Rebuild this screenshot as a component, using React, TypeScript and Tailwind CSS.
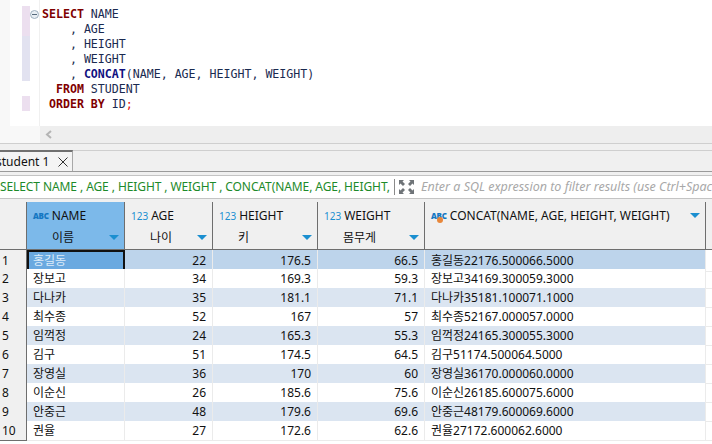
import React from 'react';

const ui = "font-['Noto_Sans','Noto_Sans_CJK_KR',sans-serif]";

const rows = [
  ['홍길동', '22', '176.5', '66.5', '홍길동22176.500066.5000'],
  ['장보고', '34', '169.3', '59.3', '장보고34169.300059.3000'],
  ['다나카', '35', '181.1', '71.1', '다나카35181.100071.1000'],
  ['최수종', '52', '167', '57', '최수종52167.000057.0000'],
  ['임꺽정', '24', '165.3', '55.3', '임꺽정24165.300055.3000'],
  ['김구', '51', '174.5', '64.5', '김구51174.500064.5000'],
  ['장영실', '36', '170', '60', '장영실36170.000060.0000'],
  ['이순신', '26', '185.6', '75.6', '이순신26185.600075.6000'],
  ['안중근', '48', '179.6', '69.6', '안중근48179.600069.6000'],
  ['권율', '27', '172.6', '62.6', '권율27172.600062.6000'],
];

const Kw = ({ children }: { children: React.ReactNode }) => (
  <span className="font-bold text-[#7f0000]">{children}</span>
);

const Arrow = () => (
  <svg width="10" height="5" viewBox="0 0 10 5" className="-mt-[2px] shrink-0">
    <path d="M0 0h10L5 5z" fill="#1b8fd0" />
  </svg>
);

const HeaderCell = ({
  icon,
  name,
  label,
  selected,
}: {
  icon: 'abc' | '123';
  name: string;
  label: string;
  selected?: boolean;
}) => (
  <div className={`flex flex-col border-r border-r-[#6e6e6e] pl-[6px] pr-[5px] ${selected ? 'bg-[#7cb9ea]' : 'bg-[#f0f0f0]'}`}>
    <div className="flex h-[26px] items-center gap-[3px] pt-[2px]">
      {icon === 'abc' ? (
        <span className="text-[8px] font-black leading-none tracking-[-0.2px] text-[#1577c2]">ABC</span>
      ) : (
        <span className="text-[10px] leading-none text-[#1b8fd0]">123</span>
      )}
      <span>{name}</span>
    </div>
    <div className="flex h-[20px] items-center justify-between">
      <span className="flex-1 pl-[19px] text-[12px]">{label}</span>
      <Arrow />
    </div>
  </div>
);

export default function App() {
  return (
    <div className={`flex h-[444px] w-[712px] flex-col overflow-hidden bg-[#f0f0f0] text-[12px] text-[#111] ${ui}`}>
      {/* SQL editor */}
      <div className="flex h-[126px] shrink-0 bg-[#f8f8f8] pl-[10px]">
        <div className="flex w-[30px] shrink-0 flex-col border-r border-r-[#f0f0f0] bg-white pl-[12px] pt-[6px]">
          <div className="relative h-[30px] w-[8px] bg-[#ecdfef]">
            <div className="absolute left-[8px] top-[4px] flex h-[9px] w-[9px] items-center justify-center rounded-full border border-[#9fb0bf] bg-[#e8eef3]">
              <div className="h-px w-[5px] bg-[#55687a]" />
            </div>
          </div>
          <div className="h-[45px] w-[8px] bg-[#e2e2f0]" />
          <div className="h-[15px] w-[8px]" />
          <div className="h-[15px] w-[8px] bg-[#ecdfef]" />
        </div>
        <pre className="flex-1 bg-white pl-[2px] pt-[7px] font-['DejaVu_Sans_Mono',monospace] text-[11.6px] leading-[15px] text-[#1a2a50]">
          <Kw>SELECT</Kw> NAME{'\n'}
          {'    , AGE\n'}
          {'    , HEIGHT\n'}
          {'    , WEIGHT\n'}
          {'    , '}<span className="font-bold text-[#10107f]">CONCAT</span>(NAME, AGE, HEIGHT, WEIGHT){'\n'}
          {'  '}<Kw>FROM</Kw> STUDENT{'\n'}
          {' '}<Kw>ORDER BY</Kw> ID<span className="text-[#e01010]">;</span>
        </pre>
      </div>

      {/* horizontal scrollbar */}
      <div className="flex h-[18px] shrink-0 border-b border-b-[#cfcfcf] bg-[#f8f8f8] pl-[40px]">
        <div className="flex flex-1 items-center bg-[#eeeeee] pl-[5px]">
          <svg width="8" height="9" viewBox="0 0 8 9">
            <path d="M6 1L2 4.5 6 8" fill="none" stroke="#b4b4b4" strokeWidth="2" />
          </svg>
        </div>
      </div>

      {/* tab strip */}
      <div className="mt-[6px] flex h-[22px] shrink-0 border-b border-b-[#9a9a9a]">
        <div className="flex w-[73px] items-center gap-[9px] border-r border-t-2 border-r-[#a8a8a8] border-t-[#707070] bg-[#f4f4f4]">
          <span className="-ml-[4px] whitespace-nowrap">student 1</span>
          <svg width="10" height="10" viewBox="0 0 10 10" className="shrink-0">
            <path d="M.5.5l9 9M9.500.5l-9 9" stroke="#333" strokeWidth="1" />
          </svg>
        </div>
        <div className="flex-1 border-t border-t-[#cfcfcf]" />
      </div>

      {/* filter bar */}
      <div className="mt-[3px] flex h-[24px] shrink-0 items-center border-y border-y-[#c4c4c4] bg-white">
        <div className="w-[394px] shrink-0 whitespace-nowrap tracking-[-0.09px] text-[#1d8a2a]">
          SELECT NAME , AGE , HEIGHT , WEIGHT , CONCAT(NAME, AGE, HEIGHT,
        </div>
        <div className="h-[16px] w-px shrink-0 bg-[#8a8a8a]" />
        <svg width="17" height="16" viewBox="0 0 17 16" className="ml-[3px] shrink-0">
          <path
            d="M1 1h5L4.500 2.500 7 5 5 7 2.500 4.500 1 6zM16 1h-5l1.500 1.500L10 5l2 2 2.500-2.500L16 6zM1 15h5l-1.500-1.500L7 11 5 9l-2.500 2.500L1 10zM16 15h-5l1.500-1.500L10 11l2-2 2.500 2.500L16 10z"
            fill="#6f7478"
          />
        </svg>
        <span className="ml-[6px] whitespace-nowrap text-[12.5px] italic text-[#a8a8a8]">
          Enter a SQL expression to filter results (use Ctrl+Space)
        </span>
      </div>

      {/* results grid */}
      <div className="mt-[3px] grid flex-1 grid-cols-[27px_98px_88px_105px_107px_281px_1fr] grid-rows-[48px] content-start bg-white">
        <div className="border-r border-b border-r-[#6e6e6e] border-b-[#6e6e6e] bg-[#f0f0f0]" />
        <div className="col-span-6 grid grid-cols-subgrid border-b border-b-[#6e6e6e] bg-[#f0f0f0]">
          <HeaderCell icon="abc" name="NAME" label="이름" selected />
          <HeaderCell icon="123" name="AGE" label="나이" />
          <HeaderCell icon="123" name="HEIGHT" label="키" />
          <HeaderCell icon="123" name="WEIGHT" label="몸무게" />
          <div className="border-r border-r-[#6e6e6e]">
            <div className="flex h-[26px] items-center justify-between pl-[6px] pr-[5px] pt-[2px]">
              <div className="flex items-center gap-[3px]">
                <span className="relative text-[8px] font-black leading-none tracking-[-0.2px] text-[#1577c2]">
                  ABC
                  <span className="absolute left-[6px] top-[5px] h-[6px] w-[6px] rounded-full bg-[#e8873a]" />
                </span>
                <span>CONCAT(NAME, AGE, HEIGHT, WEIGHT)</span>
              </div>
              <Arrow />
            </div>
          </div>
          <div />
        </div>

        {rows.map((row, i) => {
          const stripe = i === 0 ? 'bg-[#bdd4eb]' : i % 2 === 0 ? 'bg-[#dbe5f1]' : 'bg-white';
          return (
            <div key={i} className="col-span-7 grid h-[19px] grid-cols-subgrid">
              <div className="flex items-center border-r border-b border-r-[#6e6e6e] border-b-[#6e6e6e] bg-[#f0f0f0] pl-[2px] pt-px">
                {i + 1}
              </div>
              {row.map((cell, j) => {
                const isFocus = i === 0 && j === 0;
                const right = j >= 1 && j <= 3;
                return (
                  <div
                    key={j}
                    className={`flex items-center whitespace-nowrap ${right ? 'justify-end pr-[6px]' : ''} ${
                      isFocus
                        ? 'border-2 border-[#111] bg-[#6aa9e0] pl-[4px] text-[#dcebf8]'
                        : `border-r border-b border-r-[#ebebeb] border-b-[#ebebeb] pt-px ${right ? '' : 'pl-[6px]'} ${stripe}`
                    }`}
                  >
                    {cell}
                  </div>
                );
              })}
              <div className="border-b border-b-[#ebebeb]" />
            </div>
          );
        })}
        {/* next row, cut off by the window */}
        <div className="col-span-7 grid grid-cols-subgrid">
          <div className="border-r border-r-[#6e6e6e] bg-[#f0f0f0]" />
        </div>
      </div>
    </div>
  );
}
